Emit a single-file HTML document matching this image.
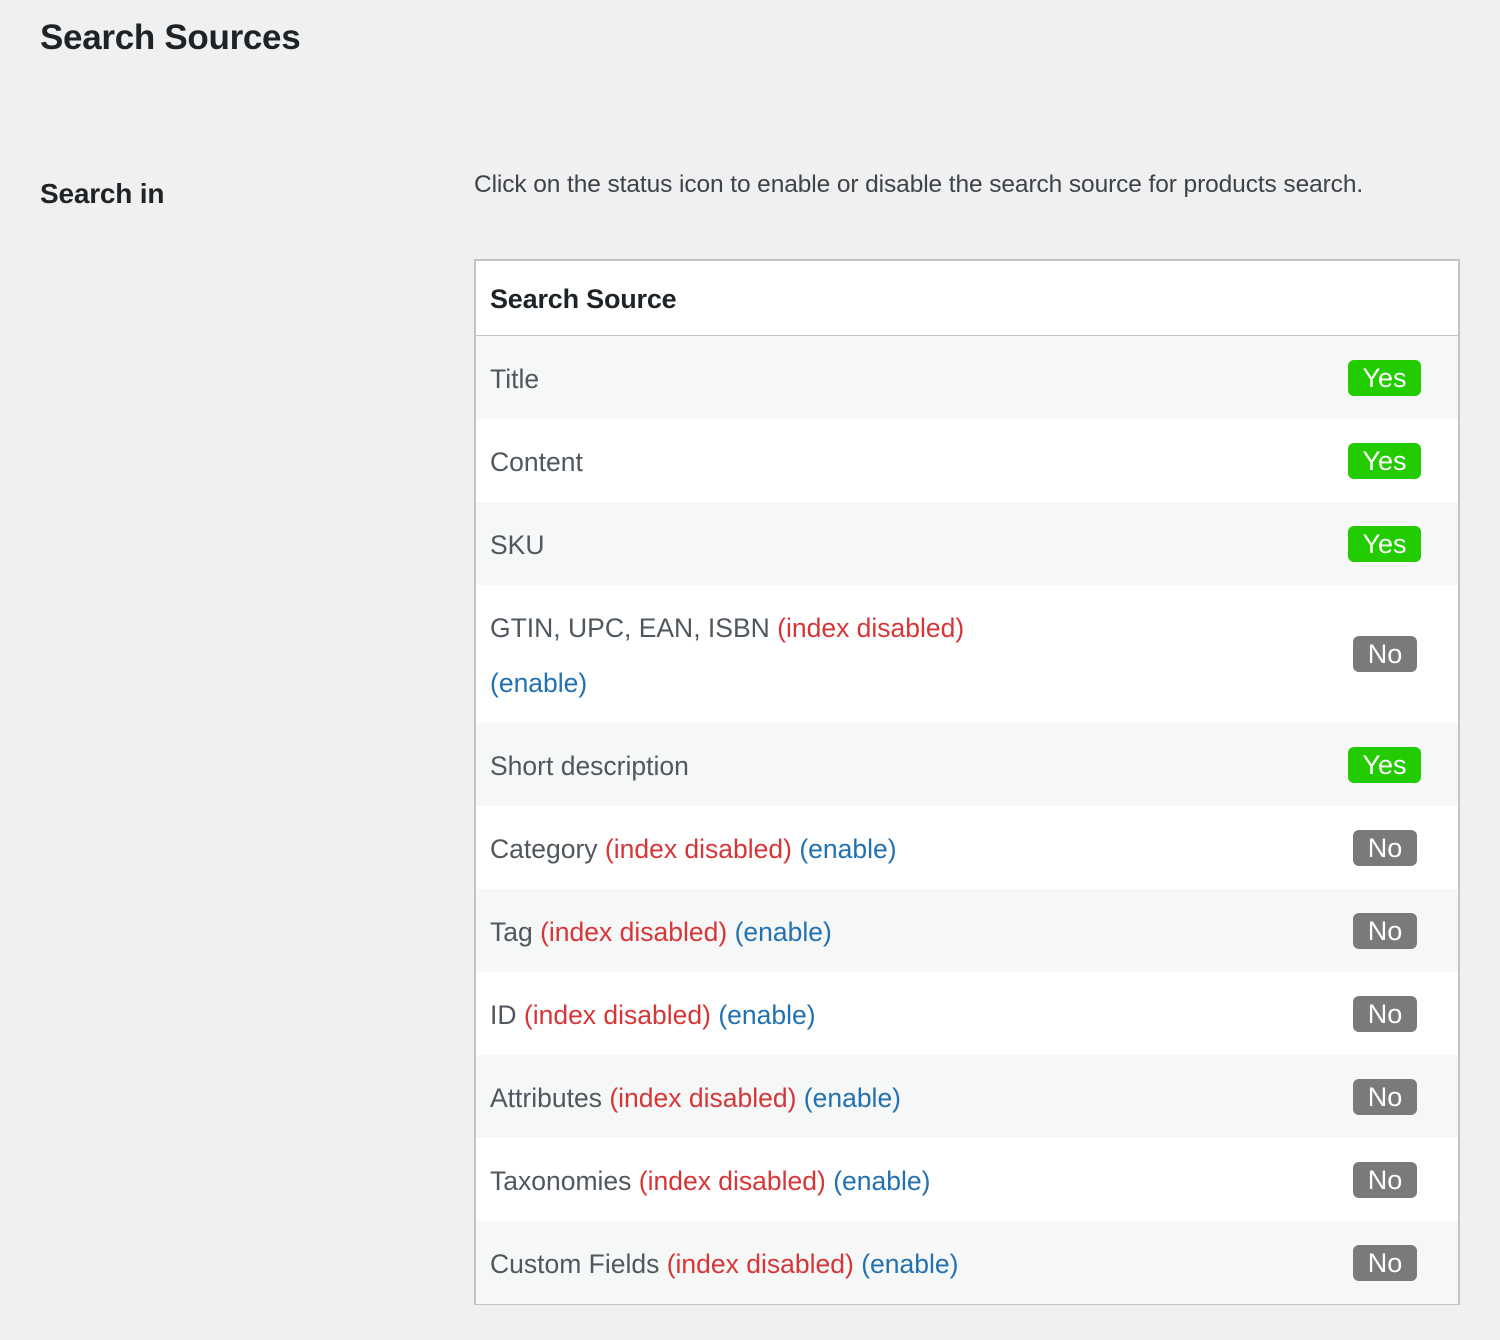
<!DOCTYPE html>
<html><head><meta charset="utf-8">
<style>
*{margin:0;padding:0;box-sizing:border-box}
body{width:1500px;height:1340px;background:#f0f0f1;font-family:"Liberation Sans",Arial,sans-serif;color:#1d2327;position:relative;overflow:hidden}
.abs{position:absolute;white-space:nowrap}
h1{position:absolute;left:40px;top:18px;font-size:35px;font-weight:bold;color:#1d2327;letter-spacing:-0.3px}
.lbl{left:40px;top:178px;font-size:28px;font-weight:bold;letter-spacing:-0.2px}
.desc{left:474px;top:171px;font-size:24.5px;color:#3c434a;letter-spacing:-0.1px}
.tbl{position:absolute;left:474px;top:259px;width:986px;height:1046px;background:#fff;border:2px solid #c3c4c7}
.hdr{position:absolute;left:0;top:0;width:100%;height:76px;border-bottom:2px solid #c3c4c7;background:#fff}
.hdr span{position:absolute;left:14px;top:23px;font-size:27px;font-weight:bold;color:#1d2327;letter-spacing:-0.2px}
.row{position:absolute;left:0;width:100%;background:#fff}
.row.alt{background:#f6f7f7}
.t{position:absolute;left:14px;font-size:26.5px;color:#50575e;white-space:nowrap}
.r{color:#d63638}.b{color:#2271b1}
.yes,.no{position:absolute;color:#fff;font-size:27px;text-align:center;border-radius:6px;height:36px;line-height:36px}
.yes{background:#22cc00;left:872px;width:73px}
.no{background:#7a7a7a;left:877px;width:64px}
</style></head><body>
<h1>Search Sources</h1>
<div class="abs lbl">Search in</div>
<div class="abs desc">Click on the status icon to enable or disable the search source for products search.</div>
<div class="tbl">
<div class="hdr"><span>Search Source</span></div>
<div class="row alt" style="top:75px;height:83px"><div class="t" style="top:28px">Title</div><div class="yes" style="top:24px">Yes</div></div>
<div class="row" style="top:158px;height:83px"><div class="t" style="top:28px">Content</div><div class="yes" style="top:24px">Yes</div></div>
<div class="row alt" style="top:241px;height:83px"><div class="t" style="top:28px">SKU</div><div class="yes" style="top:24px">Yes</div></div>
<div class="row" style="top:324px;height:138px"><div class="t" style="top:28px">GTIN, UPC, EAN, ISBN <span class="r">(index disabled)</span></div><div class="t b" style="top:83px">(enable)</div><div class="no" style="top:51px">No</div></div>
<div class="row alt" style="top:462px;height:83px"><div class="t" style="top:28px">Short description</div><div class="yes" style="top:24px">Yes</div></div>
<div class="row" style="top:545px;height:83px"><div class="t" style="top:28px">Category <span class="r">(index disabled)</span> <span class="b">(enable)</span></div><div class="no" style="top:24px">No</div></div>
<div class="row alt" style="top:628px;height:83px"><div class="t" style="top:28px">Tag <span class="r">(index disabled)</span> <span class="b">(enable)</span></div><div class="no" style="top:24px">No</div></div>
<div class="row" style="top:711px;height:83px"><div class="t" style="top:28px">ID <span class="r">(index disabled)</span> <span class="b">(enable)</span></div><div class="no" style="top:24px">No</div></div>
<div class="row alt" style="top:794px;height:83px"><div class="t" style="top:28px">Attributes <span class="r">(index disabled)</span> <span class="b">(enable)</span></div><div class="no" style="top:24px">No</div></div>
<div class="row" style="top:877px;height:83px"><div class="t" style="top:28px">Taxonomies <span class="r">(index disabled)</span> <span class="b">(enable)</span></div><div class="no" style="top:24px">No</div></div>
<div class="row alt" style="top:960px;height:83px"><div class="t" style="top:28px">Custom Fields <span class="r">(index disabled)</span> <span class="b">(enable)</span></div><div class="no" style="top:24px">No</div></div>
</div>
</body></html>
